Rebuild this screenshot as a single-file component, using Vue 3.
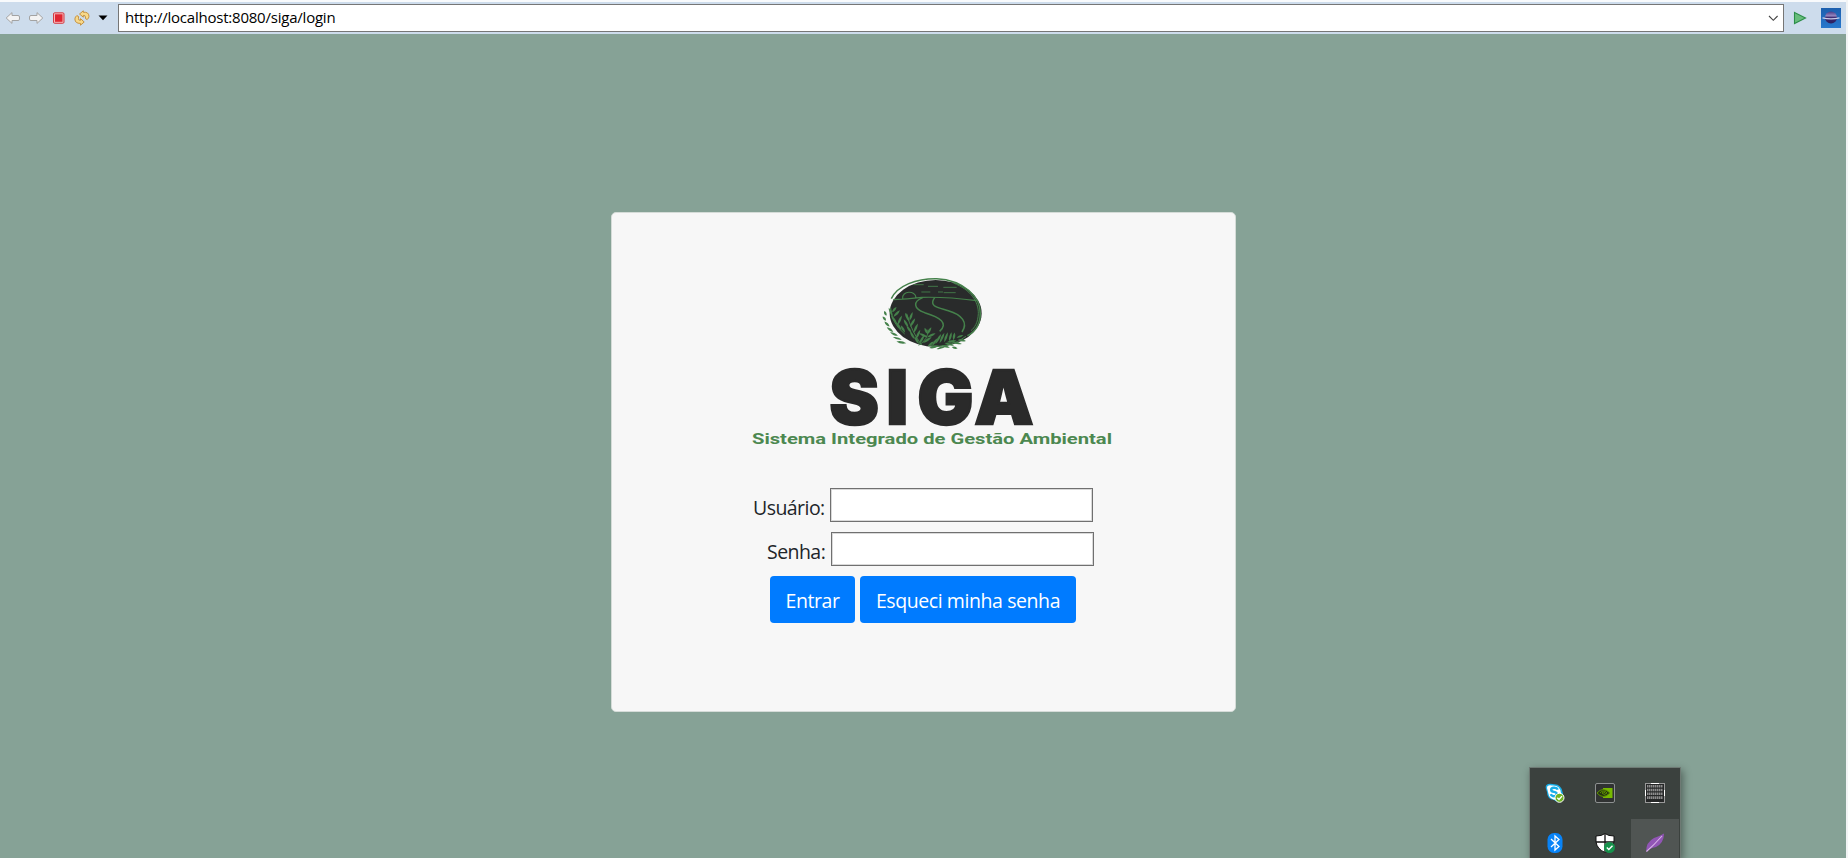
<script setup>
// x, y, angle and half length of each leaf, in emblem units
const leaves = [
  [43, 152, 50, 8], [46, 136, 65, 8], [51, 168, 45, 11], [60, 185, 35, 12], [72, 198, 25, 13], [82, 211, 15, 14], [94, 223, 10, 15],
  [62, 132, 65, 14], [73, 125, -50, 10], [72, 155, 55, 16], [80, 137, -45, 14], [89, 157, -65, 16], [86, 174, 55, 15], [99, 183, 60, 13],
  [111, 147, 65, 14], [123, 145, -70, 14], [108, 166, 60, 14], [128, 164, -60, 15], [117, 184, 55, 13], [137, 181, -65, 16],
  [127, 202, 60, 14], [144, 200, -65, 16], [140, 217, 60, 13], [155, 215, -60, 16],
  [168, 188, 65, 10], [178, 188, -60, 12], [160, 202, 25, 14], [184, 202, -25, 14], [172, 216, -35, 16],
  [205, 213, -60, 17], [216, 210, -65, 17], [228, 208, -70, 16], [241, 206, -75, 14], [252, 205, -80, 12], [194, 222, -55, 14], [270, 205, -20, 11], [182, 228, -40, 12],
  [192, 237, -12, 15], [214, 239, -15, 15], [227, 235, 15, 13], [238, 229, 15, 15], [254, 239, 15, 9], [260, 225, 10, 16], [245, 220, -10, 15], [276, 217, 10, 12],
].map(([x, y, a, l]) => ({ d: `M${-l} 0Q0-7 ${l} 0Q0 7 ${-l} 0Z`, t: `translate(${x} ${y}) rotate(${a})` }))
</script>

<template>
  <div class="window">
    <header class="toolbar">
      <div class="tools">
        <svg width="16" height="16" viewBox="0 0 16 16"><path d="M1.2 8 7 2.6V5.5H13Q14.5 5.5 14.5 7V9.2Q14.5 10.5 13 10.5H7V13.4Z" class="arrow" /></svg>
        <svg width="16" height="16" viewBox="0 0 16 16"><path d="M14.8 8 9 2.6V5.5H3Q1.5 5.5 1.5 7V9.2Q1.5 10.5 3 10.5H9V13.4Z" class="arrow" /></svg>
        <svg width="16" height="16" viewBox="0 0 16 16"><rect x="2.5" y="2.8" width="10.5" height="10.5" rx="1.2" fill="#f7b7b8" stroke="#d23c45" /><rect x="4" y="4.3" width="7.5" height="7.5" fill="#df2632" /></svg>
        <svg width="16" height="16" viewBox="0 0 16 16" fill="#f8d98a" stroke="#c18a35" stroke-width=".9" stroke-linejoin="round">
          <path d="M5.5 4 9.3.8V2.3Q14.6 1.6 15 6.2Q15 8 13.2 9.6Q10.8 9 11.4 7Q11.5 5.2 9.3 5.4V7.2Z" />
          <path d="M2.8 5.6Q5.5 6 4.5 8.4Q4.2 10.6 6.5 10.3V8.6L10.2 12 6.5 15.2V13.4Q1 13.6 .9 9Q1 6.8 2.8 5.6Z" />
        </svg>
        <svg class="caret" width="10" height="6" viewBox="0 0 10 6"><path d="M.5 .5H9.5L5 5.3Z" fill="#000" /></svg>
      </div>
      <div class="address">
        <span>http://localhost:8080/siga/login</span>
        <svg width="11" height="7" viewBox="0 0 11 7"><path d="M1 1 5.3 5.3 9.6 1" fill="none" stroke="#444" stroke-width="1.1" /></svg>
      </div>
      <svg class="go" width="14" height="14" viewBox="0 0 14 14"><path d="M1.5 1.5 12.5 7 1.5 12.5Z" fill="#68bd7c" stroke="#2b8e48" stroke-width="1.1" /></svg>
      <svg class="globe" width="20" height="20" viewBox="0 0 20 20">
        <defs>
          <linearGradient id="sky" x2="0" y2="1"><stop stop-color="#1c5fae" /><stop offset="1" stop-color="#2778cd" /></linearGradient>
          <linearGradient id="planet" x2="0" y2="1"><stop stop-color="#4b3c86" /><stop offset=".35" stop-color="#9486bf" /><stop offset=".5" stop-color="#3b2a70" /><stop offset="1" stop-color="#2b1d5c" /></linearGradient>
        </defs>
        <rect width="20" height="20" fill="url(#sky)" />
        <circle cx="10" cy="9.6" r="6" fill="url(#planet)" />
        <path d="M1.5 9.8Q10 11.8 18.5 9.8" fill="none" stroke="#c9cdea" stroke-width="1.3" />
      </svg>
    </header>

    <main class="page">
      <section class="card">
        <svg class="logo" width="380" height="190" viewBox="740 268 380 190">
          <g transform="translate(870 268) scale(.33333)">
            <ellipse cx="197" cy="136" rx="138" ry="100" fill="#292b2b" />
            <g fill="none" stroke="#45814b" stroke-width="4.5">
              <path d="M64 92C82 53 140 31 200 32C282 36 332 88 331 137C330 172 314 192 292 203" />
              <path d="M250 45C302 65 326 101 325 137C324 164 314 179 303 188" stroke-width="3" />
              <path d="M70 95Q110 93 155 88Q230 86 320 98M98 92C95 67 137 67 138 89" stroke-width="3.5" />
              <path d="M158 89C128 101 130 121 164 134C211 148 236 166 209 190M194 89C175 115 202 118 235 128C276 140 295 164 276 192" />
              <path d="M130 50H161M174 55H204M154 72H181M220 58H260M204 72H219M221 74H257" stroke-width="2.6" />
              <path d="M62 120Q64 165 104 198M110 137Q124 190 155 231M146 232Q175 214 174 185M178 233Q240 242 288 205" stroke-width="3" />
            </g>
            <path v-for="(leaf, i) in leaves" :key="i" :d="leaf.d" fill="#45814b" :transform="leaf.t" />
          </g>
          <text class="brand" y="424" x="829.5 886.5 917.5 974.5">SIGA</text>
          <text class="tagline" x="752" y="444" textLength="360" lengthAdjust="spacingAndGlyphs">Sistema Integrado de Gestão Ambiental</text>
        </svg>
        <form class="form" @submit.prevent>
          <div class="field"><label for="user">Usuário:</label><input id="user" type="text" /></div>
          <div class="field password"><label for="pass">Senha:</label><input id="pass" type="password" /></div>
          <div class="actions"><button class="enter">Entrar</button><button class="forgot" type="button">Esqueci minha senha</button></div>
        </form>
      </section>
    </main>

    <aside class="tray">
      <div class="cell"><svg width="20" height="20" viewBox="0 0 20 20">
        <path d="M1 6Q-.5 1 5 .7Q8 1 9 1.3Q16 1 17.5 9Q20 16 14 19Q11 19 9 17Q2 16 2 9Z" fill="#19aee8" />
        <path d="M2 5Q2 1.6 7 2.6Q15 2 16 10Q18 17 12 17Q4 17 3 9Z" fill="#fff" />
        <path d="M12.8 6.6Q12 4.6 9 4.8C5 5.2 5.5 8.4 9 8.9C13.5 9.6 12 13.5 9 13.2Q6.5 13.2 5.8 11.2" fill="none" stroke="#19aee8" stroke-width="2.4" />
        <circle cx="14.5" cy="14.8" r="4.5" fill="#6eb321" stroke="#fff" /><path d="M12.3 14.8 14 16.5 17 13.1" fill="none" stroke="#fff" stroke-width="1.4" />
      </svg></div>
      <div class="cell"><svg width="20" height="20" viewBox="0 0 20 20">
        <rect x=".5" y=".5" width="19" height="19" rx="1.5" fill="#303232" stroke="#8d9090" />
        <path d="M8 5H17.5V15H8Z" fill="#76b900" /><path d="M2 10Q8 3 15 10Q8 17 2 10Z" fill="#253510" stroke="#5c9100" /><path d="M5 10Q8.5 5.8 12 10Q9 13 7 10Q9 8 10 10" fill="none" stroke="#5c9100" />
      </svg></div>
      <div class="cell"><svg width="20" height="20" viewBox="0 0 20 20">
        <rect x=".5" y=".5" width="19" height="19" fill="#252727" stroke="#999" /><path d="M2 3.2H18M2 7H18M2 10.8H18M2 14.6H18" stroke="#8d8d8d" stroke-width="2.6" stroke-dasharray="1.5 .5" /><path d="M6 .5H14M6 19.5H14M.5 7V13M19.5 7V13" stroke="#fff" />
      </svg></div>
      <div class="cell"><svg width="20" height="20" viewBox="0 0 20 20">
        <rect x="2.5" width="15" height="20" rx="6.5" fill="#0883f7" /><path d="M6 6 14 13.5 10 17V3L14 6.5 6 14" fill="none" stroke="#fff" stroke-width="1.3" />
      </svg></div>
      <div class="cell"><svg width="20" height="20" viewBox="0 0 20 20">
        <path d="M10 .5Q13 3 19 3V9Q18 16 10 19.5Q2 16 1 9V3Q7 3 10 .5Z" fill="#fff" stroke="#111" stroke-width="1" /><path d="M10 1V19M1 9H19" stroke="#111" stroke-width="1.3" />
        <circle cx="14.5" cy="14.5" r="5.5" fill="#16914b" /><path d="M11.8 14.5 13.8 16.5 17.5 12.7" fill="none" stroke="#fff" stroke-width="1.4" />
      </svg></div>
      <div class="cell active"><svg width="20" height="20" viewBox="0 0 20 20">
        <path d="M1 19Q1 9 9 5Q15 3 19 .5Q19 10 11 14Q5 15 1 19Z" fill="#9155b5" /><path d="M1.5 18.5Q9 12 17 3" fill="none" stroke="#d9b5e8" stroke-width="1.1" />
      </svg></div>
    </aside>
  </div>
</template>

<style>
body { overflow: hidden; }
</style>
<style scoped>
* { box-sizing: border-box; }
.window { position: relative; width: 1848px; height: 858px; overflow: hidden; background: #86a296; font-family: "Open Sans", "Noto Sans", sans-serif; display: flex; flex-direction: column; border-right: 2px solid #f2f4f5; }
.toolbar { height: 34px; flex: none; border-top: 2px solid #f8fafc; background: #cddcec; display: flex; align-items: center; }
.tools { width: 118px; padding-left: 5px; display: flex; align-items: center; gap: 7px; }
.tools svg { flex: none; }
.caret { margin-left: 1px; }
.arrow { fill: #f3f3f3; stroke: #a3a3a3; }
.address { width: 1666px; height: 28px; background: #fff; border: 1px solid #767676; display: flex; align-items: center; justify-content: space-between; padding: 0 4px 0 6px; font-size: 15px; color: #000; line-height: 26px; }
.address span { height: 28px; letter-spacing: -.22px; }
.go { margin-left: 9px; }
.globe { margin-left: 14px; }
.page { flex: 1; padding: 178px 0 0 611px; }
.card { width: 625px; height: 500px; border: 1px solid #d5dcd8; border-radius: 5px; background: #f7f7f7; padding: 55px 0 0 128px; }
.logo { display: block; }
.brand { font: 900 74px Inter, Roboto, sans-serif; fill: #2a2a2a; stroke: #2a2a2a; stroke-width: 2.4px; }
.tagline { font: 700 15px Roboto, sans-serif; fill: #4c8850; }
.form { padding-top: 30px; color: #212529; font-size: 19.5px; }
.field { display: flex; height: 34px; margin-bottom: 10px; padding-left: 13px; }
.field label { width: 77px; line-height: 39px; letter-spacing: -.55px; white-space: nowrap; }
.field input { width: 263px; height: 34px; padding: 0 4px; border: 1px solid #707070; border-radius: 0; background: #fff; box-shadow: inset 0 0 0 1px #d9d9d9; }
.password { padding-left: 27px; }
.password label { width: 64px; }
.actions { display: flex; gap: 5px; padding-left: 30px; }
.actions button { height: 47px; border: 0; border-radius: 4px; background: #007bff; color: #fff; font: 19.5px "Open Sans", sans-serif; letter-spacing: -.42px; padding: 2px 0 0; white-space: nowrap; }
.enter { width: 85px; }
.forgot { width: 216px; }
.tray { position: absolute; left: 1529px; top: 767px; width: 152px; height: 91px; overflow: visible; background: #3b413e; border: 1px solid #6e7a74; border-bottom: 0; display: grid; grid-template-columns: repeat(3, 50px); grid-template-rows: 50px 40px; box-shadow: 2px 3px 8px rgba(0, 0, 0, .4); }
.cell { display: flex; justify-content: center; padding-top: 15px; }
.cell svg { flex: none; }
.active { position: relative; z-index: 0; }
.active::before { content: ""; position: absolute; z-index: -1; inset: 1px 1px 0; background: #505553; }
</style>
